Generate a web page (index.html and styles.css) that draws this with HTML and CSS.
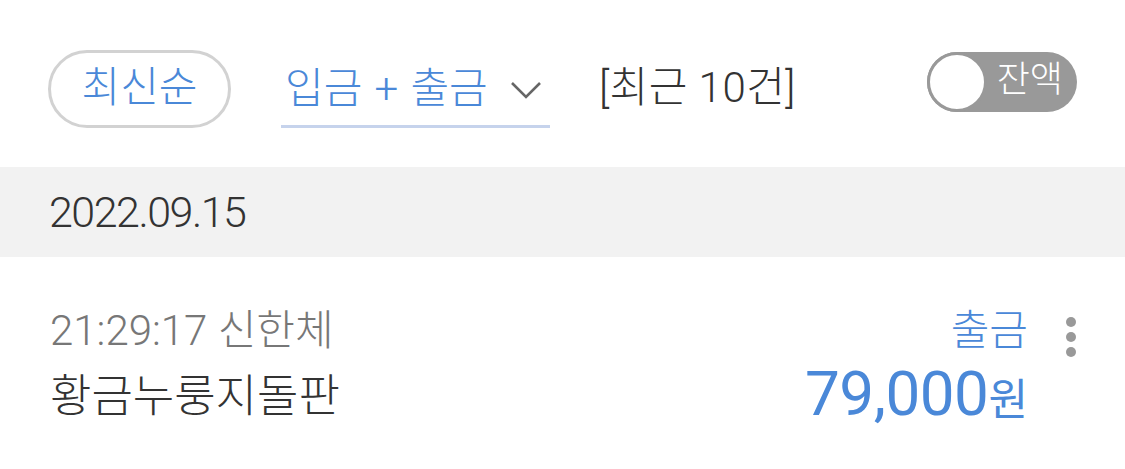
FILE: index.html
```html
<!DOCTYPE html>
<html lang="ko">
<head>
<meta charset="utf-8">
<link rel="stylesheet" href="styles.css">
</head>
<body>
<div class="toolbar">
  <div class="chip">최신순</div>
  <div class="dropdown">
    <span class="dd-text">입금 + 출금</span>
    <svg class="chev" width="32" height="20" viewBox="0 0 32 20"><path d="M2 3 L16 17 L30 3" fill="none" stroke="#666" stroke-width="2.6"/></svg>
  </div>
  <div class="count">[최근 10건]</div>
  <div class="toggle"><span class="knob"></span><span class="tlabel">잔액</span></div>
</div>
<div class="dateband">2022.09.15</div>
<div class="row">
  <div class="left">
    <div class="time">21:29:17 신한체</div>
    <div class="name">황금누룽지돌판</div>
  </div>
  <div class="right">
    <div class="kind">출금</div>
    <div class="amount"><span class="num">79,000</span><span class="won">원</span></div>
  </div>
  <div class="more"><span></span><span></span><span></span></div>
</div>
</body>
</html>
```
FILE: styles.css
```css
* { box-sizing: border-box; }
body {
  margin: 0;
  background: #fff;
  font-family: "Roboto", "Noto Sans CJK KR", sans-serif;
  font-weight: 300;
  width: 1125px;
  height: 469px;
  overflow: hidden;
}
.toolbar {
  display: flex;
  padding: 50px 48px 0 48px;
  height: 167px;
  align-items: flex-start;
}
.chip {
  width: 183px;
  height: 78px;
  border: 3px solid #d2d2d2;
  border-radius: 39px;
  display: flex;
  align-items: center;
  justify-content: center;
  color: #4a88d8;
  font-size: 42px;
  line-height: 1;
  padding-bottom: 2px;
}
.dropdown {
  margin-left: 50px;
  width: 269px;
  height: 78px;
  border-bottom: 3px solid #c6d3ec;
  display: flex;
  align-items: center;
  padding-left: 4px;
  padding-top: 2px;
}
.dd-text {
  color: #4a88d8;
  font-size: 42px;
  line-height: 1;
  word-spacing: 2px;
}
.chev { margin-left: 22px; margin-top: 2px; }
.count {
  margin-left: 49px;
  height: 78px;
  display: flex;
  align-items: center;
  font-size: 42px;
  line-height: 1;
  color: #333;
  padding-bottom: 2px;
  letter-spacing: 0.5px;
}
.toggle {
  margin-left: auto;
  margin-top: 2px;
  width: 150px;
  height: 60px;
  border-radius: 30px;
  background: #999;
  position: relative;
  display: flex;
  align-items: center;
  justify-content: flex-end;
  padding-right: 14px;
}
.knob {
  position: absolute;
  left: 0;
  top: 0;
  width: 60px;
  height: 60px;
  border-radius: 50%;
  background: #fff;
  border: 3px solid #999;
}
.tlabel {
  color: #fff;
  font-size: 36px;
  line-height: 1;
  padding-bottom: 4px;
}
.dateband {
  height: 90px;
  background: #f2f2f2;
  display: flex;
  align-items: center;
  padding-left: 49px;
  font-size: 43px;
  color: #333;
  letter-spacing: -1.5px;
}
.row {
  display: flex;
  padding: 48px 48px 0 50px;
}
.left { flex: 1; }
.time {
  font-size: 42px;
  color: #777;
  line-height: 52px;
}
.name {
  font-size: 45px;
  color: #333;
  line-height: 52px;
  margin-top: 14px;
}
.right {
  display: flex;
  flex-direction: column;
  align-items: flex-end;
}
.kind {
  font-size: 42px;
  color: #4a88d8;
  line-height: 52px;
}
.amount {
  color: #4a88d8;
  line-height: 62px;
  margin-top: 6px;
}
.num { font-size: 62px; font-weight: 400; letter-spacing: -0.5px; }
.won { font-size: 43px; font-weight: 400; }
.more {
  width: 49px;
  display: flex;
  flex-direction: column;
  align-items: flex-end;
  gap: 5px;
  padding-top: 12px;
}
.more span {
  width: 10px;
  height: 10px;
  border-radius: 50%;
  background: #999;
  margin-right: 1px;
}
```
